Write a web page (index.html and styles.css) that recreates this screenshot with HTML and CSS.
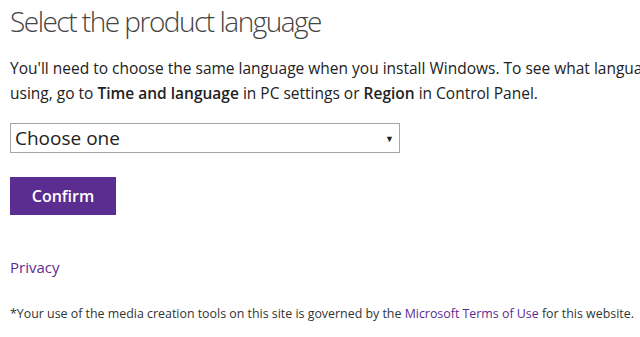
FILE: index.html
```html
<!DOCTYPE html>
<html lang="en">
<head>
  <meta charset="UTF-8" />
  <meta name="viewport" content="width=device-width, initial-scale=1" />
  <title>Select the product language</title>
  <link rel="stylesheet" href="styles.css">
</head>
<body>
  <div class="page">
    <h1 class="title">Select the product language</h1>
    <p class="intro">You'll need to choose the same language when you install Windows. To see what language you're using, go to <b>Time and language</b> in PC settings or <b>Region</b> in Control Panel.</p>

    <div class="select-box">
      <span class="select-text">Choose one</span>
      <span class="select-arrow">&#9660;</span>
    </div>

    <button class="button">Confirm</button>

    <a class="privacy" href="#">Privacy</a>

    <p class="footnote">*Your use of the media creation tools on this site is governed by the <a href="#">Microsoft Terms of Use</a> for this website.</p>
  </div>
</body>
</html>
```

FILE: styles.css
```css
body {
  font-family: 'Open Sans', 'Noto Sans', sans-serif;
  background: #fff;
  color: #222;
  margin: 0;
  padding: 0;
  overflow: hidden;
}
.page {
  padding: 3px 10px 0;
  width: 720px;
}
.title {
  font-size: 28px;
  font-weight: 300;
  letter-spacing: -1.5px;
  color: #444;
  margin: 0;
  line-height: 36px;
}
.intro {
  font-size: 15.5px;
  line-height: 25px;
  width: 700px;
  margin: 17px 0 0;
  color: #222;
}
.intro b {
  font-weight: 600;
}
.select-box {
  width: 379px;
  height: 28px;
  border: 1px solid #a6a6a6;
  margin-top: 17px;
  display: flex;
  align-items: center;
  justify-content: space-between;
  padding: 0 5px 0 4px;
}
.select-text {
  font-size: 19px;
  color: #222;
}
.select-arrow {
  font-size: 9px;
  color: #222;
}
.button {
  display: block;
  margin-top: 24px;
  width: 106px;
  height: 38px;
  background-color: #5c2d91;
  border: none;
  color: #fff;
  font-family: inherit;
  font-size: 16px;
  font-weight: 600;
  padding: 0;
}
.privacy {
  display: block;
  margin-top: 42px;
  font-size: 15px;
  color: #5c2d91;
  text-decoration: none;
  width: max-content;
}
.footnote {
  font-size: 12.4px;
  color: #333;
  margin: 28px 0 0;
}
.footnote a {
  color: #5c2d91;
  text-decoration: none;
}
```
